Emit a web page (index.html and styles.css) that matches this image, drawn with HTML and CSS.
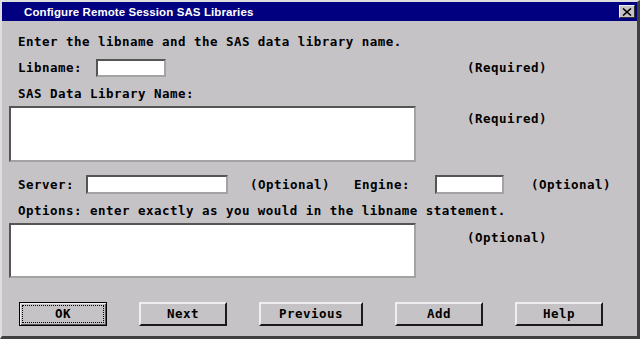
FILE: index.html
```html
<!DOCTYPE html>
<html>
<head>
<meta charset="utf-8">
<link rel="stylesheet" href="styles.css">
</head>
<body>
<div class="window">
  <div class="titlebar">
    <span class="title">Configure Remote Session SAS Libraries</span>
    <span class="close"><svg width="10" height="8" viewBox="0 0 10 8"><path d="M1 0.5 L9 7.5 M9 0.5 L1 7.5" stroke="#000" stroke-width="1.6" fill="none"/></svg></span>
  </div>
  <div class="content">
    <div class="mono intro">Enter the libname and the SAS data library name.</div>
    <div class="row r-lib">
      <span class="mono lbl w-lib">Libname:</span>
      <div class="field f-lib"></div>
      <span class="mono note n-lib">(Required)</span>
    </div>
    <div class="mono lbl sas">SAS Data Library Name:</div>
    <div class="row r-area1">
      <div class="field area"></div>
      <span class="mono note n-area1">(Required)</span>
    </div>
    <div class="row r-srv">
      <span class="mono lbl w-srv">Server:</span>
      <div class="field f-srv"></div>
      <span class="mono note n-srv">(Optional)</span>
      <span class="mono n-eng">Engine:</span>
      <div class="field f-eng"></div>
      <span class="mono note n-eng2">(Optional)</span>
    </div>
    <div class="mono lbl opts">Options: enter exactly as you would in the libname statement.</div>
    <div class="row r-area2">
      <div class="field area area2"></div>
      <span class="mono note n-area2">(Optional)</span>
    </div>
    <div class="buttons">
      <div class="btn default"><span class="mono">OK</span></div>
      <div class="btn"><span class="mono">Next</span></div>
      <div class="btn wide"><span class="mono">Previous</span></div>
      <div class="btn"><span class="mono">Add</span></div>
      <div class="btn"><span class="mono">Help</span></div>
    </div>
  </div>
</div>
</body>
</html>
```
FILE: styles.css
```css
html, body { margin: 0; padding: 0; background: #c6c3c6; }
.window {
  width: 640px; height: 339px; box-sizing: border-box;
  background: #c6c3c6;
  border-style: solid;
  border-width: 2px 3px 3px 2px;
  border-color: #dedede #404040 #404040 #dedede;
  overflow: hidden;
}
.titlebar {
  height: 19px; background: #000080;
  display: flex; align-items: center;
  padding-left: 22px; padding-right: 2px;
}
.title {
  color: #fff; font-family: "Liberation Sans", Arial, sans-serif;
  font-weight: bold; font-size: 11.5px; letter-spacing: 0.1px;
}
.close {
  margin-left: auto; width: 16px; height: 13px; box-sizing: border-box;
  background: #c6c3c6; display: flex; align-items: center; justify-content: center;
  border: 1px solid; border-color: #f0f0f0 #303030 #303030 #f0f0f0;
}
.content { padding: 0 7px; }
.mono {
  font-family: "DejaVu Sans Mono", "Liberation Mono", monospace;
  font-weight: bold; font-size: 12.5px; letter-spacing: 0.47px;
  line-height: 16px; color: #000; white-space: pre;
}
.intro { margin-top: 13px; margin-left: 9px; }
.row { display: flex; align-items: center; }
.lbl { margin-left: 9px; }
.field {
  background: #fff; box-sizing: border-box;
  border: 2px solid; border-color: #555 #a3a3a3 #a3a3a3 #555;
}
.r-lib { margin-top: 9px; height: 18px; }
.w-lib { width: 78px; }
.f-lib { width: 70px; height: 18px; }
.n-lib { margin-left: 301px; }
.sas { margin-top: 9px; }
.r-area1 { margin-top: 4px; align-items: flex-start; }
.area { width: 407px; height: 56px; }
.n-area1 { margin-left: 51px; margin-top: 5px; }
.r-srv { margin-top: 13px; height: 19px; }
.w-srv { width: 68px; }
.f-srv { width: 142px; height: 19px; }
.n-srv { margin-left: 22px; }
.n-eng { margin-left: 24px; width: 81px; }
.f-eng { width: 69px; height: 19px; }
.n-eng2 { margin-left: 27px; }
.opts { margin-top: 9px; }
.r-area2 { margin-top: 4px; align-items: flex-start; }
.area2 { height: 55px; }
.n-area2 { margin-left: 51px; margin-top: 7px; }
.buttons { display: flex; gap: 32px; margin-top: 24px; margin-left: 10px; }
.btn {
  width: 88px; height: 24px; box-sizing: border-box;
  display: flex; align-items: center; justify-content: center;
  border: 2px solid; border-color: #eeeeee #1a1a1a #1a1a1a #eeeeee;
  background: #c6c3c6; position: relative;
}
.btn.wide { width: 104px; }
.btn.default {
  border: 1px solid #000;
  box-shadow: inset 1px 1px 0 #eeeeee, inset -1px -1px 0 #555;
}
.btn.default::after {
  content: ""; position: absolute; left: 2px; top: 2px; right: 2px; bottom: 2px;
  border: 1px dotted #000;
}
```
